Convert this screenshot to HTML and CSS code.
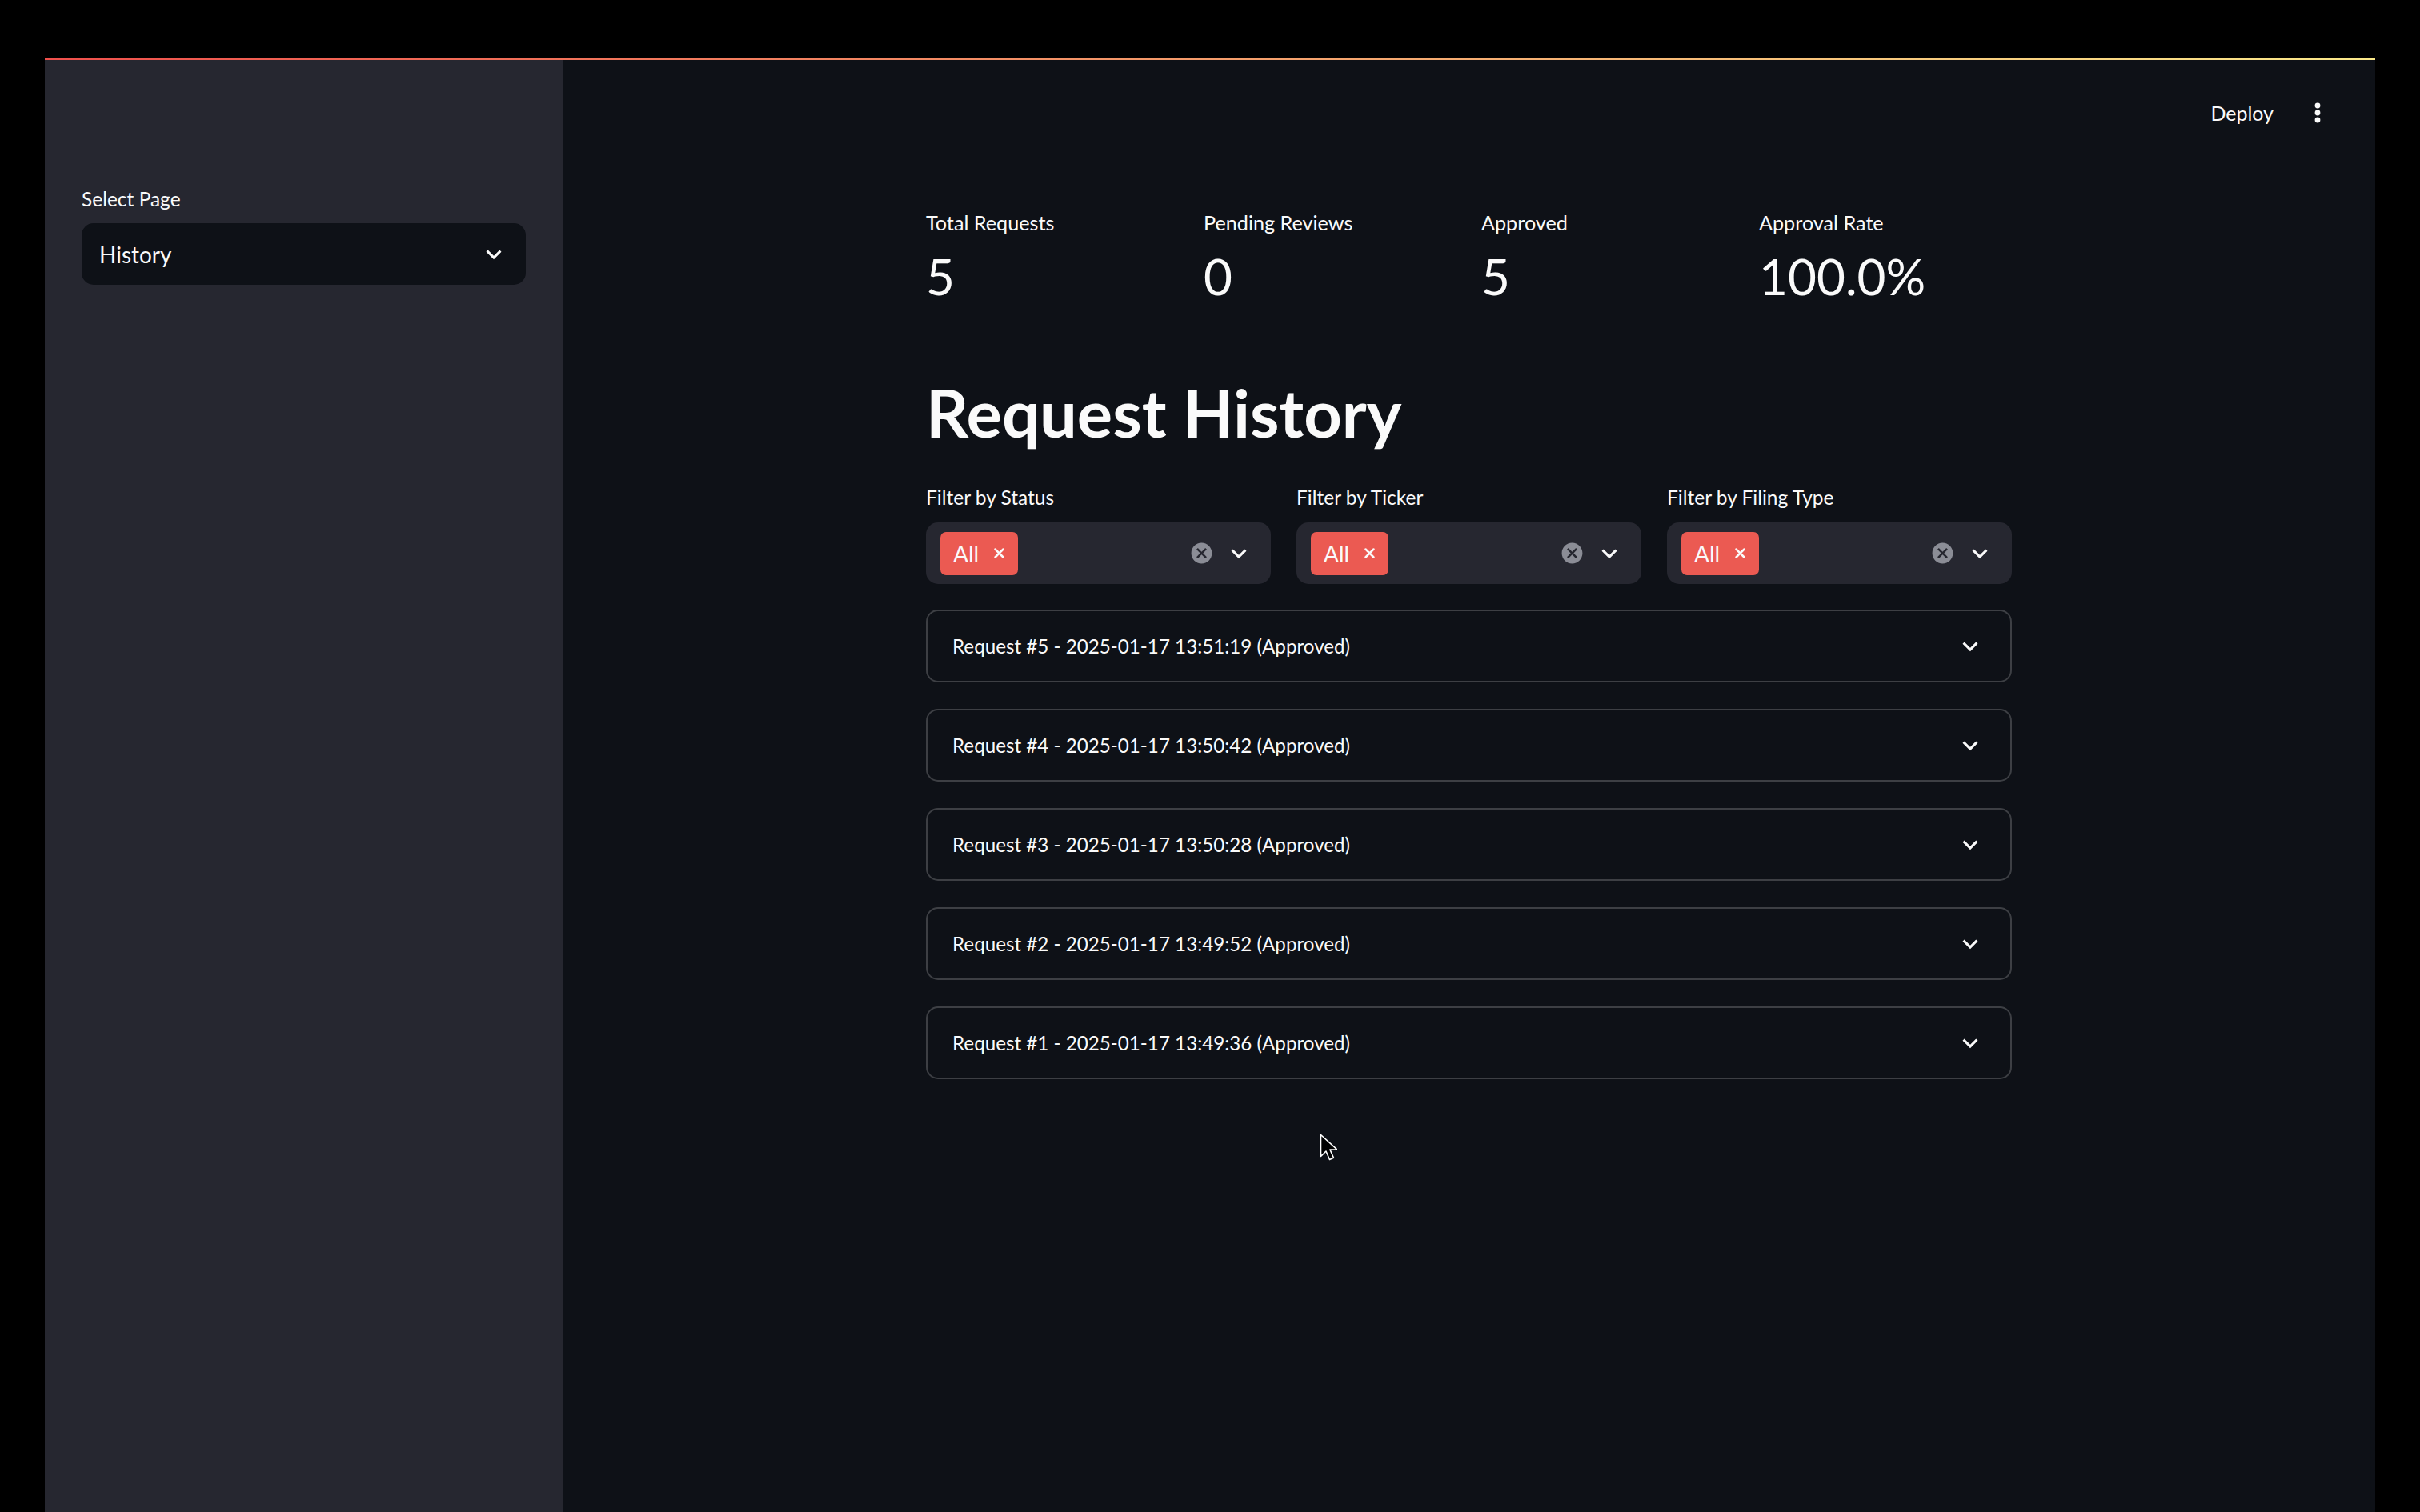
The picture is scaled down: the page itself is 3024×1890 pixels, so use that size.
FILE: index.html
```html
<!DOCTYPE html>
<html lang="en">
<head>
    <meta charset="UTF-8">
    <title>Request History</title>
    <link rel="stylesheet" href="styles.css">
</head>
<body>
    <div class="screen">
        <div class="decoration"></div>
        <div class="app">
            <!-- Sidebar with page selector -->
            <aside class="sidebar">
                <div class="field-label">Select Page</div>
                <div class="select-box">
                    <span>History</span>
                    <svg class="chevron" viewBox="0 0 24 24"><path d="M16.59 8.59L12 13.17 7.41 8.59 6 10l6 6 6-6z"/></svg>
                </div>
            </aside>

            <main class="main">
                <header class="toolbar">
                    <span class="deploy">Deploy</span>
                    <svg class="kebab" viewBox="0 0 8 26"><circle cx="4" cy="4" r="3.4"/><circle cx="4" cy="13" r="3.4"/><circle cx="4" cy="22" r="3.4"/></svg>
                </header>

                <div class="block">
                    <div class="metrics">
                        <div class="metric">
                            <div class="metric-label">Total Requests</div>
                            <div class="metric-value">5</div>
                        </div>
                        <div class="metric">
                            <div class="metric-label">Pending Reviews</div>
                            <div class="metric-value">0</div>
                        </div>
                        <div class="metric">
                            <div class="metric-label">Approved</div>
                            <div class="metric-value">5</div>
                        </div>
                        <div class="metric">
                            <div class="metric-label">Approval Rate</div>
                            <div class="metric-value">100.0%</div>
                        </div>
                    </div>

                    <h1 class="page-title">Request History</h1>

                    <div class="filters">
                        <div class="filter">
                            <div class="field-label">Filter by Status</div>
                            <div class="multiselect">
                                <span class="tag">All <svg class="tag-x" viewBox="0 0 12 12"><path d="M2 2l8 8M10 2l-8 8"/></svg></span>
                                <svg class="clear" viewBox="0 0 24 24"><path d="M12 2C6.47 2 2 6.47 2 12s4.47 10 10 10 10-4.47 10-10S17.53 2 12 2zm5 13.59L15.59 17 12 13.41 8.41 17 7 15.59 10.59 12 7 8.41 8.41 7 12 10.59 15.59 7 17 8.41 13.41 12 17 15.59z"/></svg>
                                <svg class="chevron" viewBox="0 0 24 24"><path d="M16.59 8.59L12 13.17 7.41 8.59 6 10l6 6 6-6z"/></svg>
                            </div>
                        </div>
                        <div class="filter">
                            <div class="field-label">Filter by Ticker</div>
                            <div class="multiselect">
                                <span class="tag">All <svg class="tag-x" viewBox="0 0 12 12"><path d="M2 2l8 8M10 2l-8 8"/></svg></span>
                                <svg class="clear" viewBox="0 0 24 24"><path d="M12 2C6.47 2 2 6.47 2 12s4.47 10 10 10 10-4.47 10-10S17.53 2 12 2zm5 13.59L15.59 17 12 13.41 8.41 17 7 15.59 10.59 12 7 8.41 8.41 7 12 10.59 15.59 7 17 8.41 13.41 12 17 15.59z"/></svg>
                                <svg class="chevron" viewBox="0 0 24 24"><path d="M16.59 8.59L12 13.17 7.41 8.59 6 10l6 6 6-6z"/></svg>
                            </div>
                        </div>
                        <div class="filter">
                            <div class="field-label">Filter by Filing Type</div>
                            <div class="multiselect">
                                <span class="tag">All <svg class="tag-x" viewBox="0 0 12 12"><path d="M2 2l8 8M10 2l-8 8"/></svg></span>
                                <svg class="clear" viewBox="0 0 24 24"><path d="M12 2C6.47 2 2 6.47 2 12s4.47 10 10 10 10-4.47 10-10S17.53 2 12 2zm5 13.59L15.59 17 12 13.41 8.41 17 7 15.59 10.59 12 7 8.41 8.41 7 12 10.59 15.59 7 17 8.41 13.41 12 17 15.59z"/></svg>
                                <svg class="chevron" viewBox="0 0 24 24"><path d="M16.59 8.59L12 13.17 7.41 8.59 6 10l6 6 6-6z"/></svg>
                            </div>
                        </div>
                    </div>

                    <div class="expanders">
                        <div class="expander">
                            <span>Request #5 - 2025-01-17 13:51:19 (Approved)</span>
                            <svg class="chevron" viewBox="0 0 24 24"><path d="M16.59 8.59L12 13.17 7.41 8.59 6 10l6 6 6-6z"/></svg>
                        </div>
                        <div class="expander">
                            <span>Request #4 - 2025-01-17 13:50:42 (Approved)</span>
                            <svg class="chevron" viewBox="0 0 24 24"><path d="M16.59 8.59L12 13.17 7.41 8.59 6 10l6 6 6-6z"/></svg>
                        </div>
                        <div class="expander">
                            <span>Request #3 - 2025-01-17 13:50:28 (Approved)</span>
                            <svg class="chevron" viewBox="0 0 24 24"><path d="M16.59 8.59L12 13.17 7.41 8.59 6 10l6 6 6-6z"/></svg>
                        </div>
                        <div class="expander">
                            <span>Request #2 - 2025-01-17 13:49:52 (Approved)</span>
                            <svg class="chevron" viewBox="0 0 24 24"><path d="M16.59 8.59L12 13.17 7.41 8.59 6 10l6 6 6-6z"/></svg>
                        </div>
                        <div class="expander">
                            <span>Request #1 - 2025-01-17 13:49:36 (Approved)</span>
                            <svg class="chevron" viewBox="0 0 24 24"><path d="M16.59 8.59L12 13.17 7.41 8.59 6 10l6 6 6-6z"/></svg>
                        </div>
                    </div>
                </div>

                <!-- mouse pointer captured in the screenshot -->
                <svg class="cursor" viewBox="0 0 22 35"><path d="M1.5 1.5v27l6.5-6.5 4.5 10.5 5-2.2-4.5-10.2h9z"/></svg>
            </main>
        </div>
    </div>
</body>
</html>
```

FILE: styles.css
```css
/* Reset basic styles */
* {
    margin: 0;
    padding: 0;
    box-sizing: border-box;
}

body {
    font-family: 'Lato', sans-serif;
    background: #000;
    color: #fafafa;
    height: 1890px;
    overflow: hidden;
}

.screen {
    margin-left: 56px;
    width: 2912px;
    padding-top: 72px;
}

.decoration {
    height: 3px;
    background: linear-gradient(90deg, #f0504c, #fbe98a);
}

.app {
    display: flex;
    height: 1815px;
}

/* Sidebar */
.sidebar {
    width: 647px;
    flex: none;
    background-color: #262730;
    padding: 156px 46px 0;
}

.field-label {
    font-size: 24.5px;
    line-height: 36px;
    margin-bottom: 12px;
}

.select-box {
    height: 77px;
    background-color: #0e1117;
    border-radius: 15px;
    display: flex;
    align-items: center;
    justify-content: space-between;
    padding: 0 21px 0 22px;
    font-size: 28px;
}

.chevron {
    width: 38px;
    height: 38px;
    fill: #fafafa;
    flex: none;
}

/* Main area */
.main {
    flex: 1;
    background-color: #0e1117;
    position: relative;
}

.toolbar {
    display: flex;
    justify-content: flex-end;
    align-items: center;
    gap: 51px;
    height: 40px;
    margin-top: 46px;
    padding-right: 68px;
}

.deploy {
    font-size: 25px;
}

.kebab {
    width: 8px;
    height: 26px;
    fill: #fafafa;
}

.block {
    width: 1357px;
    margin: 99px auto 0;
}

.metrics {
    display: grid;
    grid-template-columns: repeat(4, 1fr);
    column-gap: 31px;
}

.metric-label {
    font-size: 25.2px;
    line-height: 36px;
}

.metric-value {
    font-size: 62px;
    line-height: 70px;
    margin-top: 14px;
}

.page-title {
    font-size: 83px;
    font-weight: 700;
    line-height: 100px;
    margin-top: 85px;
}

.filters {
    display: grid;
    grid-template-columns: repeat(3, 1fr);
    column-gap: 32px;
    margin-top: 39px;
}

.filter .field-label {
    margin-bottom: 13px;
}

.multiselect {
    height: 77px;
    background-color: #262730;
    border-radius: 15px;
    display: flex;
    align-items: center;
    padding: 0 21px 0 18px;
}

.tag {
    height: 54px;
    background-color: #eb5a52;
    border-radius: 7px;
    display: flex;
    align-items: center;
    gap: 18px;
    padding: 0 16px;
    font-size: 28px;
}

.tag-x {
    width: 15px;
    height: 15px;
    stroke: #fafafa;
    stroke-width: 2;
    stroke-linecap: round;
}

.clear {
    width: 31px;
    height: 31px;
    fill: #8b8d96;
    margin-left: auto;
    margin-right: 12px;
}

.expanders {
    display: flex;
    flex-direction: column;
    gap: 33px;
    margin-top: 32px;
}

.expander {
    height: 91px;
    border: 2px solid rgba(250, 250, 250, 0.2);
    border-radius: 15px;
    display: flex;
    align-items: center;
    justify-content: space-between;
    padding: 0 31px 0 31px;
    font-size: 24.2px;
}

.cursor {
    position: absolute;
    left: 946px;
    top: 1342px;
    width: 22px;
    height: 35px;
    fill: #000;
    stroke: #fff;
    stroke-width: 1.6;
    stroke-linejoin: round;
}
```
